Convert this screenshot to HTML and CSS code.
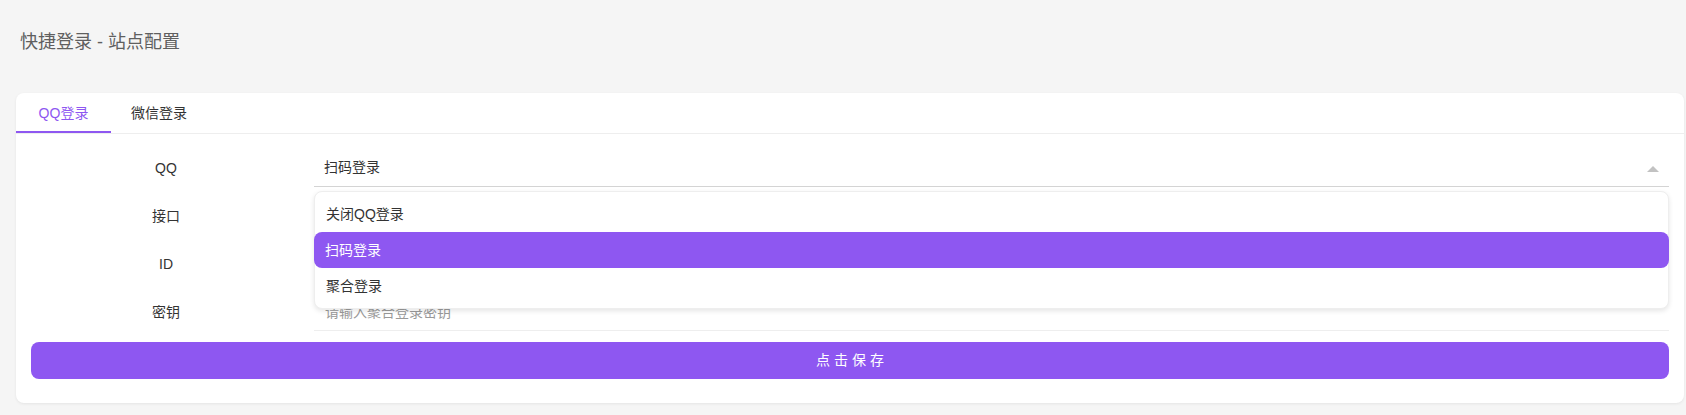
FILE: index.html
```html
<!DOCTYPE html>
<html lang="zh-CN">
<head>
<meta charset="utf-8">
<title>快捷登录 - 站点配置</title>
<link rel="stylesheet" href="styles.css">
</head>
<body>
<div class="page">
  <div class="page-title">快捷登录 - 站点配置</div>
  <div class="card">
    <div class="tabs">
      <div class="tab active">QQ登录</div>
      <div class="tab">微信登录</div>
    </div>
    <div class="card-body">
      <div class="form-row">
        <div class="form-label">QQ</div>
        <div class="form-field select open">
          <span class="select-value">扫码登录</span>
          <span class="arrow"></span>
          <div class="dropdown">
            <div class="option">关闭QQ登录</div>
            <div class="option selected">扫码登录</div>
            <div class="option">聚合登录</div>
          </div>
        </div>
      </div>
      <div class="form-row">
        <div class="form-label">接口</div>
        <div class="form-field input"></div>
      </div>
      <div class="form-row">
        <div class="form-label">ID</div>
        <div class="form-field input"></div>
      </div>
      <div class="form-row">
        <div class="form-label">密钥</div>
        <div class="form-field input"><span class="placeholder">请输入聚合登录密钥</span></div>
      </div>
      <div class="save-btn">点击保存</div>
    </div>
  </div>
</div>
</body>
</html>
```

FILE: styles.css
```css
html, body {
  margin: 0;
  padding: 0;
  background: #f5f5f5;
  font-family: "Liberation Sans", "Noto Sans CJK SC", sans-serif;
  color: #333;
}

.page {
  padding: 30px 2px 12px 16px;
}

.page-title {
  margin-left: 4px;
  font-size: 18px;
  line-height: 24px;
  color: #5f5f5f;
  margin-bottom: 39px;
}

.card {
  background: #fff;
  border-radius: 8px;
  box-shadow: 0 1px 3px rgba(0, 0, 0, 0.07);
}

.tabs {
  display: flex;
  height: 40px;
  border-bottom: 1px solid #eeeeee;
}

.tab {
  box-sizing: border-box;
  height: 40px;
  line-height: 40px;
  padding: 0 20px;
  font-size: 14px;
  color: #333;
}

.tab.active {
  width: 95px;
  text-align: center;
  padding: 0;
  color: #8e57f1;
  border-bottom: 2px solid #8e57f1;
  line-height: 40px;
}

.card-body {
  padding: 15px 15px 24px 15px;
}

.form-row {
  display: flex;
  align-items: stretch;
  height: 38px;
  margin-bottom: 10px;
}

.form-row:nth-child(4) {
  margin-bottom: 11px;
}

.form-label {
  width: 270px;
  flex: none;
  text-align: center;
  font-size: 14px;
  line-height: 38px;
  color: #333;
}

.form-field {
  position: relative;
  flex: 1;
  margin-left: 13px;
  box-sizing: border-box;
  height: 38px;
  padding-left: 10px;
  font-size: 14px;
  line-height: 38px;
  border-bottom: 1px solid #eeeeee;
}

.form-field.select {
  line-height: 37px;
  border-bottom-color: #d4d4d4;
}

.placeholder {
  color: #999;
  padding-left: 1px;
}

.arrow {
  position: absolute;
  right: 10px;
  top: 17px;
  width: 0;
  height: 0;
  border-left: 6px solid transparent;
  border-right: 6px solid transparent;
  border-bottom: 6px solid #c2c2c2;
}

.dropdown {
  position: absolute;
  z-index: 10;
  left: 0;
  right: 0;
  top: calc(100% + 5px);
  background: #fff;
  border: 1px solid #eeeeee;
  border-radius: 8px;
  box-shadow: 0 2px 5px rgba(0, 0, 0, 0.1);
  padding: 4px 0;
}

.option {
  height: 36px;
  line-height: 36px;
  padding: 0 11px;
  font-size: 14px;
  color: #333;
  border-radius: 8px;
}

.option.selected {
  background: #8e57f1;
  color: #fff;
  margin: 0 -1px;
}

.save-btn {
  height: 37px;
  line-height: 37px;
  text-align: center;
  background: #8e57f1;
  color: #fff;
  border-radius: 8px;
  font-size: 14px;
  letter-spacing: 4px;
  text-indent: 4px;
}
```
